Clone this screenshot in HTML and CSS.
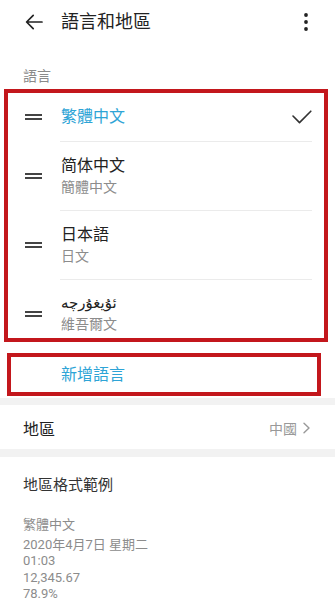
FILE: index.html
```html
<!DOCTYPE html>
<html lang="zh-Hant">
<head>
    <meta charset="UTF-8">
    <meta name="viewport" content="width=device-width, initial-scale=1.0">
    <title>語言和地區</title>
    <link rel="stylesheet" href="styles.css">
</head>
<body>
    <header class="toolbar">
        <svg class="back" width="18" height="16" viewBox="0 0 18 16">
            <path d="M17 8H1.8M8.2 1.4L1.6 8l6.6 6.6" fill="none" stroke="#222" stroke-width="1.7" stroke-linecap="round" stroke-linejoin="round"/>
        </svg>
        <h1 class="title">語言和地區</h1>
        <svg class="more" width="6" height="18" viewBox="0 0 6 18">
            <circle cx="3" cy="2" r="1.9" fill="#222"/>
            <circle cx="3" cy="9" r="1.9" fill="#222"/>
            <circle cx="3" cy="16" r="1.9" fill="#222"/>
        </svg>
    </header>

    <div class="section-label">語言</div>

    <div class="lang-list marked">
        <div class="lang-row single">
            <span class="handle"></span>
            <div class="lang-text">
                <div class="lang-name active">繁體中文</div>
            </div>
            <svg class="check" width="20" height="14" viewBox="0 0 20 14">
                <path d="M1 6l6.5 6.6L18.8 1.2" fill="none" stroke="#333" stroke-width="1.6" stroke-linecap="round" stroke-linejoin="round"/>
            </svg>
        </div>
        <div class="divider"></div>
        <div class="lang-row">
            <span class="handle"></span>
            <div class="lang-text">
                <div class="lang-name">简体中文</div>
                <div class="lang-sub">簡體中文</div>
            </div>
        </div>
        <div class="divider"></div>
        <div class="lang-row">
            <span class="handle"></span>
            <div class="lang-text">
                <div class="lang-name">日本語</div>
                <div class="lang-sub">日文</div>
            </div>
        </div>
        <div class="divider"></div>
        <div class="lang-row last">
            <span class="handle"></span>
            <div class="lang-text">
                <div class="lang-name uyghur" dir="rtl">ئۇيغۇرچە</div>
                <div class="lang-sub">維吾爾文</div>
            </div>
        </div>
    </div>

    <div class="add-wrap">
        <div class="add-lang marked">新增語言</div>
    </div>

    <div class="gap"></div>

    <div class="region-row">
        <span class="region-label">地區</span>
        <span class="region-value">中國
            <svg width="9" height="12" viewBox="0 0 9 12">
                <path d="M2 1.2l5 4.8-5 4.8" fill="none" stroke="#999" stroke-width="1.4" stroke-linecap="round" stroke-linejoin="round"/>
            </svg>
        </span>
    </div>

    <div class="gap wide"></div>

    <div class="format">
        <div class="format-title">地區格式範例</div>
        <div class="format-lines">
            <div class="first">繁體中文</div>
            <div>2020年4月7日 星期二</div>
            <div>01:03</div>
            <div>12,345.67</div>
            <div>78.9%</div>
        </div>
    </div>
</body>
</html>
```

FILE: styles.css
```css
body {
    margin: 0;
    background-color: #ffffff;
    font-family: Roboto, "Noto Sans CJK TC", "DejaVu Sans", sans-serif;
    color: #222;
    overflow: hidden;
}

.toolbar {
    display: flex;
    align-items: center;
    height: 44px;
    padding: 0 26px 0 25px;
}

.back {
    flex: none;
}

.title {
    margin: 0 0 0 18px;
    font-size: 18px;
    font-weight: 400;
    line-height: 24px;
    color: #222;
    flex: 1;
}

.more {
    flex: none;
}

.section-label {
    margin: 22px 0 3px 23px;
    font-size: 14px;
    line-height: 20px;
    color: #8a8a8a;
}

/* red highlight frames from the screenshot */
.marked {
    border: 4px solid #c3171c;
}

.lang-list {
    margin: 0 7px 0 4px;
}

.lang-row {
    display: flex;
    align-items: center;
    height: 68px;
    padding-left: 17px;
    box-sizing: border-box;
}

.lang-row.single {
    height: 48px;
}

.lang-row.last {
    height: 58px;
    padding-top: 12px;
    align-items: flex-start;
}

.handle {
    flex: none;
    width: 17px;
    height: 6px;
    border-top: 2px solid #444;
    border-bottom: 2px solid #444;
    box-sizing: border-box;
}

.lang-row.last .handle {
    margin-top: 19px;
}

.lang-text {
    margin-left: 19px;
    flex: 1;
}

.lang-name {
    font-size: 16px;
    line-height: 22px;
    color: #222;
}

.lang-name.active {
    color: #2ea4d6;
}

.lang-name.uyghur {
    text-align: left;
    font-size: 15px;
}

.lang-sub {
    font-size: 14px;
    line-height: 20px;
    color: #8c8c8c;
}

.check {
    flex: none;
    margin-right: 12px;
}

.divider {
    height: 1px;
    margin: 0 12px 0 52px;
    background-color: #ebebeb;
}

.add-wrap {
    padding: 11px 14px 2px 7px;
}

.add-lang {
    height: 35px;
    line-height: 35px;
    padding-left: 50px;
    font-size: 16px;
    color: #2ea4d6;
}

.gap {
    height: 7px;
    background-color: #f2f2f2;
}

.gap.wide {
    height: 8px;
}

.region-row {
    display: flex;
    align-items: center;
    justify-content: space-between;
    height: 44px;
    padding: 2px 24px 0 23px;
    box-sizing: border-box;
}

.region-label {
    font-size: 16px;
    color: #222;
}

.region-value {
    display: flex;
    align-items: center;
    gap: 5px;
    font-size: 14px;
    color: #999;
}

.format {
    padding: 16px 23px 0;
}

.format-title {
    font-size: 15px;
    line-height: 24px;
    color: #333;
}

.format-lines {
    margin-top: 20px;
    font-size: 13px;
    line-height: 16.5px;
    color: #8c8c8c;
}

.format-lines .first {
    margin-bottom: 3px;
}
```
